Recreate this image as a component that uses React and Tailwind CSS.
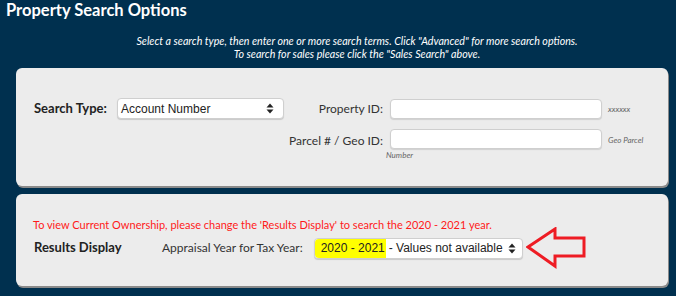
import React from "react";

const SelectArrows = () => (
  <svg width="8" height="11" viewBox="0 0 8 11" className="shrink-0">
    <path d="M4 0.5 L7.5 4.5 L0.5 4.5 Z" fill="#222" />
    <path d="M4 10.5 L7.5 6.5 L0.5 6.5 Z" fill="#222" />
  </svg>
);

const Hint = ({ children, className = "" }) => (
  <span className={`text-[8px] italic text-[#666] ${className}`}>{children}</span>
);

const TextInput = () => (
  <div className="w-[212px] h-[20px] bg-white rounded-[4px] border border-[#cfcfcf] shadow-[0_1px_1px_rgba(0,0,0,0.12)]" />
);

export default function App() {
  return (
    <div className="w-[676px] h-[296px] bg-[#00304f] overflow-hidden font-['Lato','Open_Sans',sans-serif]">
      <h1 className="pl-[6px] text-white font-bold text-[16.5px] leading-[20px]">Property Search Options</h1>

      <div className="pl-[38px] mt-[14px] text-center text-white italic text-[10.7px] leading-[13px]">
        <p>Select a search type, then enter one or more search terms. Click "Advanced" for more search options.</p>
        <p>To search for sales please click the "Sales Search" above.</p>
      </div>

      {/* search panel */}
      <div className="ml-[16px] mt-[8px] w-[652px] h-[118px] bg-[#ececec] rounded-[6px] shadow-[1px_2px_0_#8a8a8a] pl-[18px] pt-[30px] flex">
        <div className="w-[238px] shrink-0 flex items-center h-[21px]">
          <span className="w-[83px] shrink-0 text-[13px] font-bold text-[#222]">Search Type:</span>
          <div className="w-[167px] shrink-0 h-[21px] bg-white rounded-[4px] border border-[#cfcfcf] shadow-[0_1px_1px_rgba(0,0,0,0.15)] flex items-center justify-between pl-[3px] pr-[9px] font-['Liberation_Sans',sans-serif] text-[12px] text-[#222] whitespace-nowrap">
            <span>Account Number</span>
            <SelectArrows />
          </div>
        </div>

        <div className="flex flex-col gap-[10px] pt-[1px]">
          <div className="flex items-center">
            <span className="w-[111px] text-right text-[12px] text-[#333]">Property ID:</span>
            <div className="ml-[7px]"><TextInput /></div>
            <Hint className="ml-[6px]">xxxxxx</Hint>
          </div>
          <div className="flex">
            <span className="w-[111px] text-right text-[12px] text-[#333] pt-[3px] whitespace-nowrap">Parcel # / Geo ID:</span>
            <div className="ml-[3px] flex flex-col">
              <div className="ml-[4px]"><TextInput /></div>
              <Hint className="leading-[10px] mt-[1px]">Number</Hint>
            </div>
            <Hint className="ml-[6px] pt-[5px]">Geo Parcel</Hint>
          </div>
        </div>
      </div>

      {/* results display panel */}
      <div className="ml-[16px] mt-[8px] w-[652px] h-[92px] bg-[#ececec] rounded-[6px] shadow-[1px_2px_0_#8a8a8a] pl-[17px] pt-[24px]">
        <p className="text-[11px] leading-[14px] text-[#ff1a1a]">
          To view Current Ownership, please change the 'Results Display' to search the 2020 - 2021 year.
        </p>
        <div className="flex items-center -mt-[5px]">
          <span className="w-[129px] shrink-0 pl-[1px] text-[13px] font-bold text-[#222]">Results Display</span>
          <span className="text-[12px] text-[#333]">Appraisal Year for Tax Year:</span>
          <div className="ml-[11px] w-[209px] shrink-0 h-[21px] bg-white rounded-[4px] border border-[#cfcfcf] shadow-[0_1px_1px_rgba(0,0,0,0.15)] flex items-center font-['Liberation_Sans',sans-serif] text-[12px] text-[#222] whitespace-nowrap">
            <span className="h-full flex items-center bg-[#ffff00] rounded-l-[4px] pl-[6px] pr-[1px]">2020 - 2021</span>
            <span className="pl-[3px]">- Values not available</span>
            <span className="ml-auto mr-[6px]"><SelectArrows /></span>
          </div>
          <svg width="62" height="42" viewBox="0 0 62 42" className="ml-[3px] shrink-0">
            <path d="M2 20 L29 2 L29 11 L58 11 L58 29 L29 29 L29 39 Z" fill="none" stroke="#ee1c24" strokeWidth="3" strokeLinejoin="miter" />
          </svg>
        </div>
      </div>
    </div>
  );
}
